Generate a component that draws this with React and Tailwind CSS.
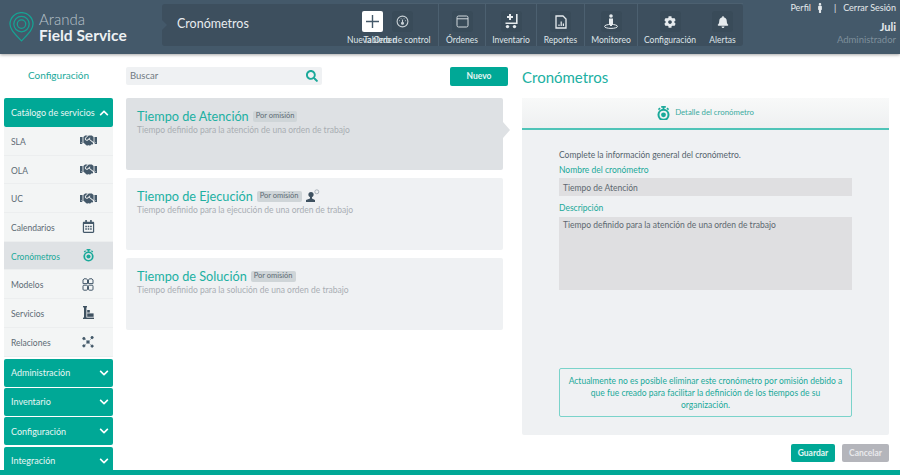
import React from 'react';
import { FaHandshake, FaRegCalendarAlt, FaCog, FaBell, FaChevronDown, FaChevronUp, FaSearch, FaMale } from 'react-icons/fa';

const Stopwatch = ({ size = 14, color = '#1aa99a' }) => (
    <svg width={size} height={size * 1.15} viewBox="0 0 14 16" fill="none">
        <rect x="4.5" y="0" width="5" height="1.8" fill={color} />
        <rect x="6" y="1" width="2" height="2.5" fill={color} />
        <rect x="1.2" y="2.2" width="2.4" height="1.6" transform="rotate(-40 2.5 3)" fill={color} />
        <rect x="10.4" y="2.2" width="2.4" height="1.6" transform="rotate(40 11.5 3)" fill={color} />
        <circle cx="7" cy="9.5" r="5.4" stroke={color} strokeWidth="2.2" />
        <circle cx="7" cy="9.5" r="2.6" fill={color} />
    </svg>
);

const ModelsIcon = () => (
    <svg width="12" height="13" viewBox="0 0 12 13" fill="none" stroke="#44596a" strokeWidth="1">
        <path d="M2 .8h2.6L5.5 2v3.6H1V2z" />
        <path d="M7.4.8H10L11 2v3.6H6.5V2z" />
        <rect x="1" y="7.2" width="4.5" height="5" rx="1" />
        <rect x="6.5" y="7.2" width="4.5" height="5" rx="1" />
    </svg>
);

const ServicesIcon = () => (
    <svg width="11" height="13" viewBox="0 0 11 13" fill="#3f5261">
        <rect x="1" y="0" width="2.4" height="13" />
        <rect x="0" y="0" width="4" height="1.4" />
        <rect x="0" y="11.6" width="11" height="1.4" />
        <rect x="4.2" y="4" width="2.6" height="2.6" />
        <rect x="4.2" y="7.4" width="6.4" height="3.4" />
    </svg>
);

const RelationsIcon = () => (
    <svg width="12" height="12" viewBox="0 0 14 14" fill="#44596a" stroke="#44596a" strokeWidth="0.8">
        <path d="M2.5 2.5 11.5 11.5M11.5 2.5 2.5 11.5" fill="none" strokeDasharray="1.6 0.6" />
        <circle cx="2.2" cy="3" r="1.4" />
        <circle cx="11.8" cy="1.8" r="1.4" />
        <circle cx="2.2" cy="11.5" r="1.4" />
        <circle cx="11.8" cy="11.8" r="1.4" />
        <circle cx="7" cy="7" r="1.6" />
    </svg>
);

const Logo = () => (
    <svg width="25" height="30" viewBox="0 0 26 31" fill="none" stroke="#16a394">
        <path d="M13 30C6 22.5 1 18 1 12.5a12 12 0 0 1 24 0C25 18 20 22.5 13 30Z" strokeWidth="1.3" />
        <circle cx="13" cy="12.5" r="8" strokeWidth="1.3" />
        <circle cx="13" cy="12.5" r="4.4" strokeWidth="1.3" />
    </svg>
);

const GaugeIcon = () => (
    <svg width="13" height="13" viewBox="0 0 13 13" fill="none" stroke="#c9d1d6" strokeWidth="1.1">
        <circle cx="6.5" cy="6.5" r="5.4" />
        <path d="M6.5 7.5V4.6" />
        <circle cx="6.5" cy="8.2" r="1" fill="#c9d1d6" />
        <path d="M3.4 5.6h.6M9 5.6h.6M4.8 3.6h.5M7.8 3.6h.5" />
    </svg>
);

const OrdersIcon = () => (
    <svg width="13" height="13" viewBox="0 0 13 13" fill="none" stroke="#d3dade" strokeWidth="1">
        <rect x="1" y="1" width="11" height="11" rx="1.5" />
        <path d="M1 3.8h11" />
    </svg>
);

const CartIcon = () => (
    <svg width="15" height="15" viewBox="0 0 15 15" fill="#e6ebee">
        <path d="M5 0h2v2h2v2H7v2H5V4H3V2h2z" />
        <path d="M12 0h1.6v10H1.5V8.4H12z" />
        <circle cx="3.5" cy="12.6" r="1.7" />
        <circle cx="10.5" cy="12.6" r="1.7" />
    </svg>
);

const ReportIcon = () => (
    <svg width="12" height="14" viewBox="0 0 12 14" fill="none" stroke="#e6ebee" strokeWidth="1.3">
        <path d="M1 1h7l3 3v9H1z" />
        <path d="M4 11V9.5M6.2 11V6.5M8.4 11V8.5" strokeWidth="1.2" />
    </svg>
);

const MonitorIcon = () => (
    <svg width="14" height="15" viewBox="0 0 14 15" fill="#e6ebee">
        <circle cx="7" cy="2" r="1.8" />
        <path d="M5 4.5h4V10H8v2H6v-2H5z" />
        <ellipse cx="7" cy="12.4" rx="6.5" ry="2" fill="none" stroke="#e6ebee" strokeWidth="1" />
    </svg>
);

const PersonClock = () => (
    <svg width="14" height="14" viewBox="0 0 14 14">
        <circle cx="5" cy="5.5" r="2.6" fill="#3f5261" />
        <path d="M4 7h2v2.5l3 1.5v2H0v-2l4-1.5z" fill="#3f5261" />
        <circle cx="10.8" cy="2.8" r="2" fill="none" stroke="#9aa6ae" strokeWidth="0.8" />
    </svg>
);

const NavItem = ({ label, children, className = '', labelClass = '', border = true }) => (
    <div className={`flex flex-col items-center pt-[7px] ${border ? 'border-r border-[#4c6070]' : ''} ${className}`}>
        <div className="w-[21px] h-[21px] rounded-[3px] bg-[#394b59] flex items-center justify-center">{children}</div>
        <span className={`mt-[2px] whitespace-nowrap text-[8.5px] leading-[12px] text-[#dfe5e9] ${labelClass}`}>{label}</span>
    </div>
);

const SideItem = ({ label, icon, active }) => (
    <div className={`h-[28.7px] flex items-center justify-between pl-[7px] border-b border-[#eceeef] ${active ? 'bg-[#dfe2e5] text-[#1aa99a]' : 'bg-[#f3f5f5] text-[#5c6a74]'}`}>
        <span className="pt-[3px] text-[8.5px]">{label}</span>
        <span className="w-[18px] mr-[16px] flex justify-center">{icon}</span>
    </div>
);

const SideHeader = ({ label, open, h = 'h-[28px] mb-[1.4px]' }) => (
    <div className={`${h} shrink-0 flex items-center justify-between pl-[7px] pr-[4px] rounded-[2px] bg-[#00a896] text-[#e6f6f4]`}>
        <span className="text-[9px] whitespace-nowrap">{label}</span>
        {open ? <FaChevronUp size={10} color="#fff" /> : <FaChevronDown size={10} color="#fff" />}
    </div>
);

const Badge = () => (
    <span className="h-[11px] px-[3px] flex items-center rounded-[2px] bg-[#cfd5d8] text-[#5d6b75] text-[7.5px]">Por omisión</span>
);

const TimerCard = ({ title, desc, active, extra }) => (
    <div className={`relative h-[72px] px-[11px] pt-[9px] rounded-[2px] ${active ? 'bg-[#dee1e4]' : 'bg-[#eff1f3]'}`}>
        <div className="flex items-center gap-[4px]">
            <span className="text-[12.7px] leading-[18px] text-[#20b0a2]">{title}</span>
            <Badge />
            {extra}
        </div>
        <p className="text-[8.5px] leading-[11px] text-[#a9aeb3]">{desc}</p>
        {active && (
            <div className="absolute left-full top-[24px] border-y-[8px] border-y-transparent border-l-[7px] border-l-[#dee1e4]" />
        )}
    </div>
);

const App = () => {
    return (
        <div className="w-[900px] h-[475px] flex flex-col overflow-hidden bg-white font-['Lato','Noto_Sans',sans-serif]">
            {/* Header */}
            <header className="h-[54px] shrink-0 flex bg-[#44596a] shadow-[0_1px_3px_rgba(0,0,0,0.35)] z-10">
                <div className="w-[162px] flex items-center pl-[9px] gap-[5px]">
                    <Logo />
                    <div className="flex flex-col">
                        <span className="text-[15px] leading-[15px] font-light text-[#b9c3ca]">Aranda</span>
                        <span className="text-[15.5px] leading-[16px] font-bold text-[#eef1f3]">Field Service</span>
                    </div>
                </div>
                <div className="relative w-[581px] h-[42px] mt-[4px] flex rounded-[3px] bg-[#3d4f5e]">
                    <div className="absolute left-0 top-[16px] border-y-[5px] border-y-transparent border-l-[5px] border-l-[#44596a]" />
                    <div className="w-[198px] pl-[15px] pt-[11px] text-[12.5px] leading-[18px] text-[#e8ecef]">Cronómetros</div>
                    <div className="flex -mt-px border-t border-[#4c6070]">
                        <div className="w-[24px] flex flex-col items-center pt-[7px]">
                            <div className="w-[21px] h-[21px] rounded-[2px] bg-white flex items-center justify-center">
                                <svg width="13" height="13" viewBox="0 0 13 13" stroke="#44596a" strokeWidth="1.4"><path d="M6.5 0v13M0 6.5h13" /></svg>
                            </div>
                            <span className="mt-[2px] whitespace-nowrap text-[8.5px] leading-[12px] text-[#dfe5e9]">Nueva Orden</span>
                        </div>
                        <NavItem label="Tablero de control" className="w-[55px] pr-[18px]" labelClass="mr-[10px]"><GaugeIcon /></NavItem>
                        <NavItem label="Órdenes" className="w-[47px]"><OrdersIcon /></NavItem>
                        <NavItem label="Inventario" className="w-[51px]"><CartIcon /></NavItem>
                        <NavItem label="Reportes" className="w-[48px]"><ReportIcon /></NavItem>
                        <NavItem label="Monitoreo" className="w-[53px]"><MonitorIcon /></NavItem>
                        <NavItem label="Configuración" className="w-[64px]" border={false}><FaCog size={12} color="#e6ebee" /></NavItem>
                        <NavItem label="Alertas" className="w-[41px]" border={false}><FaBell size={12} color="#e6ebee" /></NavItem>
                    </div>
                </div>
                <div className="flex-1 flex flex-col items-end pr-[4px] pt-[1px] text-[9px] leading-[13px]">
                    <div className="flex items-center text-[#e4e9ec]">
                        Perfil
                        <FaMale size={10} color="#e4e9ec" className="mx-[4px]" />
                        <span className="ml-[5px] mr-[7px]">|</span>
                        Cerrar Sesión
                    </div>
                    <span className="mt-[6px] text-[11px] font-bold text-[#e4e9ec]">Juli</span>
                    <span className="text-[9.5px] text-[#7e8f9b]">Administrador</span>
                </div>
            </header>

            {/* Body */}
            <div className="flex-1 min-h-0 flex">
                <aside className="w-[109px] ml-[4px] shrink-0 flex flex-col overflow-hidden">
                    <div className="h-[44px] shrink-0 pt-[14px] text-center text-[10px] leading-[15px] text-[#1aa99a]">Configuración</div>
                    <SideHeader label="Catálogo de servicios" open h="h-[29px]" />
                    <div className="shrink-0">
                        <SideItem label="SLA" icon={<FaHandshake size={17} color="#44596a" />} />
                        <SideItem label="OLA" icon={<FaHandshake size={17} color="#44596a" />} />
                        <SideItem label="UC" icon={<FaHandshake size={17} color="#44596a" />} />
                        <SideItem label="Calendarios" icon={<FaRegCalendarAlt size={13} color="#44596a" />} />
                        <SideItem label="Cronómetros" active icon={<Stopwatch size={11} />} />
                        <SideItem label="Modelos" icon={<ModelsIcon />} />
                        <SideItem label="Servicios" icon={<ServicesIcon />} />
                        <SideItem label="Relaciones" icon={<RelationsIcon />} />
                    </div>
                    <div className="h-[2px] shrink-0" />
                    <SideHeader label="Administración" />
                    <SideHeader label="Inventario" />
                    <SideHeader label="Configuración" />
                    <SideHeader label="Integración" />
                </aside>

                <main className="w-[377px] ml-[13px] shrink-0 pt-[13px]">
                    <div className="flex items-start">
                        <div className="w-[196px] h-[18px] shrink-0 pl-[4px] pr-[4px] flex items-center justify-between rounded-[2px] bg-[#eff1f3] text-[9.5px] text-[#6f7a82]">
                            Buscar
                            <FaSearch size={12} color="#1aa99a" />
                        </div>
                        <button className="ml-[128px] w-[58px] h-[19px] shrink-0 rounded-[2px] bg-[#00a896] text-[8.5px] font-bold text-[#e6f6f4]">Nuevo</button>
                    </div>
                    <div className="mt-[12px] flex flex-col gap-[8px]">
                        <TimerCard active title="Tiempo de Atención" desc="Tiempo definido para la atención de una orden de trabajo" />
                        <TimerCard title="Tiempo de Ejecución" desc="Tiempo definido para la ejecución de una orden de trabajo" extra={<PersonClock />} />
                        <TimerCard title="Tiempo de Solución" desc="Tiempo definido para la solución de una orden de trabajo" />
                    </div>
                </main>

                <section className="w-[367px] ml-[19px] shrink-0 flex flex-col">
                    <h1 className="h-[44px] pt-[11px] text-[15px] leading-[24px] font-normal text-[#20b0a2]">Cronómetros</h1>
                    <div className="h-[337px] flex flex-col rounded-[2px] bg-[#eff1f3]">
                        <div className="h-[32px] shrink-0 flex items-center justify-center gap-[5px] border-b-2 border-[#4fc4b8] bg-gradient-to-b from-[#f8f9f9] to-[#eef0f1]">
                            <Stopwatch size={13} />
                            <span className="text-[7.8px] text-[#3aab9f]">Detalle del cronómetro</span>
                        </div>
                        <div className="flex-1 flex flex-col px-[37px] pt-[19px] pb-[18px]">
                            <p className="text-[8.5px] leading-[12px] text-[#55636d]">Complete la información general del cronómetro.</p>
                            <label className="mt-[3px] text-[8.5px] leading-[12px] text-[#1aa99a]">Nombre del cronómetro</label>
                            <div className="mt-[2px] h-[18px] pl-[4px] pt-[2px] flex items-center bg-[#dfdfe1] text-[8.5px] text-[#5d6870]">Tiempo de Atención</div>
                            <label className="mt-[6px] text-[8.5px] leading-[12px] text-[#1aa99a]">Descripción</label>
                            <div className="mt-[3px] h-[73px] pl-[4px] pt-[2px] bg-[#dfdfe1] text-[8.5px] leading-[12px] text-[#5d6870]">Tiempo definido para la atención de una orden de trabajo</div>
                            <div className="mt-auto h-[49px] px-[6px] flex items-center justify-center text-center rounded-[2px] border-[1.5px] border-[#7ad3ca] text-[8.5px] leading-[12px] text-[#1aa99a]">
                                Actualmente no es posible eliminar este cronómetro por omisión debido a que fue creado para facilitar la definición de los tiempos de su organización.
                            </div>
                        </div>
                    </div>
                    <div className="mt-[9px] flex justify-end gap-[7px]">
                        <button className="w-[44px] h-[18px] rounded-[2px] bg-[#00a896] text-[8.5px] font-bold text-[#e6f6f4]">Guardar</button>
                        <button className="w-[47px] h-[18px] rounded-[2px] bg-[#b4b5bb] text-[8.5px] font-bold text-[#e9e9ec]">Cancelar</button>
                    </div>
                </section>
            </div>

            <footer className="h-[5px] shrink-0 bg-[#00a896]" />
        </div>
    );
};

export default App;
